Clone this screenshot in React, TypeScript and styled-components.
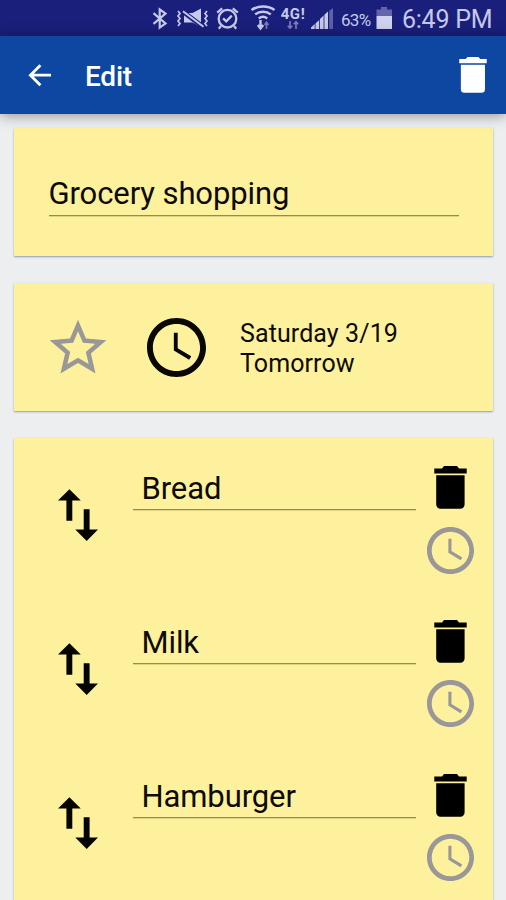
import React from 'react';
import styled, { createGlobalStyle } from 'styled-components';

const GlobalStyle = createGlobalStyle`
  * { box-sizing: border-box; }
  html, body { margin: 0; padding: 0; background: #eceef0; }
  body { font-family: Roboto, "Noto Sans", sans-serif; overflow: hidden; }
  svg { display: block; flex: none; }
`;

const Screen = styled.div`
  width: 506px;
  height: 900px;
  overflow: hidden;
  display: flex;
  flex-direction: column;
  background: #eceef0;
`;

const StatusBar = styled.header`
  flex: none;
  height: 36px;
  display: flex;
  align-items: center;
  justify-content: flex-end;
  padding-right: 14px;
  background: #1a1f7c;
  color: #c6c9ea;
`;

const StatusItem = styled.div<{ $width: number; $gap: number }>`
  flex: none;
  width: ${(p) => p.$width}px;
  height: 36px;
  margin-right: ${(p) => p.$gap}px;
`;

const StatusText = styled.span<{ $size: number; $width: number; $gap?: number; $spacing?: number }>`
  flex: none;
  width: ${(p) => p.$width}px;
  margin-right: ${(p) => p.$gap ?? 0}px;
  font-size: ${(p) => p.$size}px;
  line-height: 36px;
  letter-spacing: ${(p) => p.$spacing ?? 0}px;
  padding-top: 3px;
  white-space: nowrap;
`;

const Network = styled.div`
  flex: none;
  width: 26px;
  height: 36px;
  margin-right: 5px;
  padding-top: 8px;
  display: flex;
  flex-direction: column;
  align-items: center;
`;

const NetworkLabel = styled.div`
  display: flex;
  font-size: 15px;
  font-weight: 700;
  letter-spacing: 0.6px;
  line-height: 12px;
  height: 12px;
`;

const AppBar = styled.nav`
  flex: none;
  height: 78px;
  display: flex;
  align-items: center;
  padding: 0 19px 0 28px;
  background: #0d47a1;
  color: #fff;
  box-shadow: 0 1px 13px rgba(0, 0, 0, 0.42);
  z-index: 1;
`;

const Title = styled.h1`
  flex: 1;
  margin: 4px 0 0 34px;
  font-size: 28px;
  line-height: 36px;
  font-weight: 500;
  letter-spacing: -0.2px;
`;

const Content = styled.main`
  flex: 1;
  min-height: 0;
  display: flex;
  flex-direction: column;
  gap: 27px;
  padding: 14px 13px 0 14px;
`;

const Card = styled.section<{ $height: number }>`
  flex: none;
  height: ${(p) => p.$height}px;
  background: #fef19d;
  border-radius: 1px;
  box-shadow: 0 1px 2px rgba(60, 90, 120, 0.55);
  color: #0c0a02;
`;

const TitleCard = styled(Card)`
  padding: 45px 34px 0 34.5px;
`;

const DateCard = styled(Card)`
  display: flex;
  align-items: center;
`;

const Field = styled.div<{ $inset: number; $lineHeight: number }>`
  height: 43px;
  padding-left: ${(p) => p.$inset}px;
  border-bottom: 1px solid #958c55;
  box-shadow: 0 1px 0 rgba(149, 140, 85, 0.3);
  font-size: 31px;
  line-height: ${(p) => p.$lineHeight}px;
  letter-spacing: -0.1px;
  white-space: nowrap;
`;

const StarSlot = styled.div`
  margin: 1px 0 0 30px;
`;

const ClockSlot = styled.div`
  margin: 0 0 0 35px;
`;

const DateText = styled.div`
  margin: 3px 0 0 34px;
  font-size: 25px;
  line-height: 29.5px;
  letter-spacing: 0.1px;
`;

const ItemRow = styled.div`
  height: 153.8px;
  display: grid;
  grid-template-columns: 119px 283px 1fr;
`;

const Handle = styled.div`
  padding: 51px 0 0 44px;
`;

const ItemField = styled.div`
  padding-top: 29px;
`;

const Actions = styled.div`
  display: flex;
  flex-direction: column;
  align-items: center;
  padding: 28px 8px 0 0;
  gap: 17.5px;
`;

const TrashIcon = ({ width, height, color }: { width: number; height: number; color: string }) => (
  <svg width={width} height={height} viewBox="0 0 33 43" preserveAspectRatio="none" fill={color}>
    <path d="M0.3 2.4H8L10 0h13l2 2.4h7.7v5H.3zM2.2 9.2h28.4v29.3a4.2 4.2 0 0 1-4.2 4.2h-20a4.2 4.2 0 0 1-4.2-4.2z" />
  </svg>
);

const ClockIcon = ({ size, color }: { size: number; color: string }) => (
  <svg width={size} height={size} viewBox="2 2 20 20" fill={color}>
    <path d="M11.99 2C6.47 2 2 6.48 2 12s4.47 10 9.99 10C17.52 22 22 17.52 22 12S17.52 2 11.99 2zM12 20c-4.42 0-8-3.58-8-8s3.58-8 8-8 8 3.58 8 8-3.58 8-8 8z" />
    <path d="M12.4 7H11.1v6l5.2 3.15.7-1.15-4.6-2.75z" />
  </svg>
);

const StarIcon = () => (
  <svg width="68" height="68" viewBox="0 0 24 24" fill="#9a9798">
    <path d="M22 9.24l-7.19-.62L12 2 9.19 8.63 2 9.24l5.46 4.73L5.82 21 12 17.27 18.18 21l-1.63-7.03L22 9.24zM12 15.4l-3.76 2.27 1-4.28-3.32-2.88 4.38-.38L12 6.1l1.71 4.04 4.38.38-3.32 2.88 1 4.28L12 15.4z" />
  </svg>
);

const ReorderIcon = () => (
  <svg width="40" height="52" viewBox="0 0 40 52" fill="#050500">
    <path d="M11.4 0.3L22.8 11.5H14.3V31.7H8.4V11.5H0zM25.7 20.3h5.9v20.2H40L28.7 52 17.3 40.5h8.4z" />
  </svg>
);

const BackIcon = () => (
  <svg width="23" height="23" viewBox="0 0 23 23" fill="none" stroke="#fff" strokeWidth="2.8">
    <path d="M23 11.2H2.8M12.4 1.2L2.4 11.2l10 10" />
  </svg>
);

const BluetoothIcon = () => (
  <svg width="16" height="36" viewBox="0 0 16 36" fill="none" stroke="currentColor" strokeWidth="2.2">
    <path d="M1.5 13.2l12 10.3-5.8 4.2V9.3l5.8 4.2-12 10.3" />
  </svg>
);

const VibrateMuteIcon = () => (
  <svg width="34" height="36" viewBox="0 0 34 36" fill="none" stroke="currentColor">
    <path d="M2 11l2 2.5-2 2.5 2 2.5-2 2.5 2 2.5-2 2.5M31 11l-2 2.5 2 2.5-2 2.5 2 2.5-2 2.5 2 2.5" strokeWidth="1.7" />
    <path d="M8 13h8.5L25 8.5v18.7l-8.5-4.7H8z" fill="currentColor" stroke="none" />
    <path d="M7.5 12.2l20 15" stroke="#1a1f7c" strokeWidth="4.6" />
    <path d="M7 11.2l20.5 15.6" strokeWidth="2" />
  </svg>
);

const AlarmIcon = () => (
  <svg width="24" height="36" viewBox="0 0 24 36" fill="none" stroke="currentColor" strokeWidth="2.3">
    <circle cx="11.5" cy="18.7" r="8.8" />
    <path d="M1.2 12.6l5-4.2M21.8 12.6l-5-4.2M5 26l-2.2 2.8M18 26l2.2 2.8M7.1 18.3l3.2 3.1 5.5-5.8" />
  </svg>
);

const WifiIcon = () => (
  <svg width="26" height="36" viewBox="0 0 26 36" fill="none" stroke="currentColor" strokeWidth="2.5">
    <path d="M1.5 10c6.5-4.6 16.5-4.6 23 0M5.2 14.4c4.5-3.7 11.1-3.7 15.6 0M8.8 18.5c2.6-2.1 5.8-2.1 8.4 0" />
    <path d="M10.5 20v7M7.8 25l2.7 3.5 2.7-3.5" strokeWidth="2.4" />
    <path d="M16.5 29v-6M14.5 25l2-2.7 2 2.7" stroke="#7779ba" strokeWidth="1.7" />
  </svg>
);

const NetworkArrows = () => (
  <svg width="12" height="9" viewBox="0 0 12 9" fill="none" stroke="#7c7dba" strokeWidth="1.7">
    <path d="M3 1v7M.8 5.7L3 8.2l2.2-2.5M9 9V2M6.8 4.2L9 1.8l2.2 2.4" />
  </svg>
);

const SignalIcon = () => (
  <svg width="23" height="36" viewBox="0 0 23 36" fill="currentColor">
    <path d="M0 29v-1.5L3.7 24v5zM4.5 29v-5.5L8.2 20v9zM9 29V19l3.6-3.4V29zM13.4 29V14.8l3.6-3.4V29z" />
    <path d="M18.2 29V11l3.8-3v21z" fill="#5d60ab" />
  </svg>
);

const BatteryIcon = () => (
  <svg width="17" height="36" viewBox="0 0 17 36">
    <path d="M5 7h6v2.5h5V16H.5V9.5H5z" fill="#6265aa" />
    <path d="M.5 16H16v13H.5z" fill="#cfd1ee" />
  </svg>
);

const items = ['Bread', 'Milk', 'Hamburger'];

export default function App() {
  return (
    <>
      <GlobalStyle />
      <Screen>
        <StatusBar>
          <StatusItem $width={16} $gap={8}><BluetoothIcon /></StatusItem>
          <StatusItem $width={34} $gap={6}><VibrateMuteIcon /></StatusItem>
          <StatusItem $width={24} $gap={10}><AlarmIcon /></StatusItem>
          <StatusItem $width={26} $gap={4}><WifiIcon /></StatusItem>
          <Network>
            <NetworkLabel>4G!</NetworkLabel>
            <NetworkArrows />
          </Network>
          <StatusItem $width={23} $gap={7}><SignalIcon /></StatusItem>
          <StatusText $size={17} $width={31} $gap={4} $spacing={-0.7}>63%</StatusText>
          <StatusItem $width={17} $gap={9}><BatteryIcon /></StatusItem>
          <StatusText $size={25} $width={90} $spacing={-0.25}>6:49 PM</StatusText>
        </StatusBar>
        <AppBar>
          <BackIcon />
          <Title>Edit</Title>
          <TrashIcon width={28} height={36} color="#fff" />
        </AppBar>
        <Content>
          <TitleCard $height={128}>
            <Field $inset={0} $lineHeight={41}>Grocery shopping</Field>
          </TitleCard>
          <DateCard $height={128}>
            <StarSlot><StarIcon /></StarSlot>
            <ClockSlot><ClockIcon size={59} color="#080700" /></ClockSlot>
            <DateText>
              <div>Saturday 3/19</div>
              <div>Tomorrow</div>
            </DateText>
          </DateCard>
          <Card $height={480}>
            {items.map((item) => (
              <ItemRow key={item}>
                <Handle><ReorderIcon /></Handle>
                <ItemField><Field $inset={8.5} $lineHeight={44}>{item}</Field></ItemField>
                <Actions>
                  <TrashIcon width={33} height={43} color="#000" />
                  <ClockIcon size={47} color="#9a9798" />
                </Actions>
              </ItemRow>
            ))}
          </Card>
        </Content>
      </Screen>
    </>
  );
}
